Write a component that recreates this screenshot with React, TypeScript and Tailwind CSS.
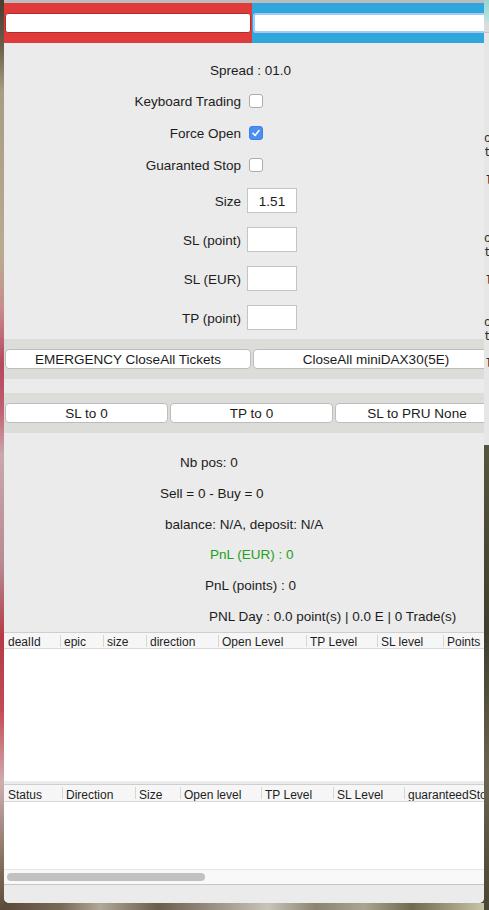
import React from "react";

function Checkbox({ checked }: { checked?: boolean }) {
  if (checked) {
    return (
      <span className="ml-[8px] flex h-[14px] w-[14px] items-center justify-center rounded-[3px] border border-[#3d7fe6] bg-[#4b8ff5]">
        <svg width="10" height="10" viewBox="0 0 10 10">
          <path d="M2 5.3 L4.1 7.4 L8 2.6" fill="none" stroke="white" strokeWidth="1.6" strokeLinecap="round" strokeLinejoin="round" />
        </svg>
      </span>
    );
  }
  return <span className="ml-[8px] block h-[14px] w-[14px] rounded-[3px] border border-[#adadad] bg-white" />;
}

function CheckRow({ label, checked, mt }: { label: string; checked?: boolean; mt: string }) {
  return (
    <div className={`flex h-[20px] items-center ${mt}`}>
      <span className="w-[237px] pt-[3px] text-right">{label}</span>
      <Checkbox checked={checked} />
    </div>
  );
}

function InputRow({ label, value, mt }: { label: string; value?: string; mt: string }) {
  return (
    <div className={`flex h-[25px] items-center ${mt}`}>
      <span className="w-[237px] pt-[3px] text-right">{label}</span>
      <div className="ml-[6px] h-[25px] w-[50px] border border-[#c4c4c4] bg-white pt-[1px] text-center leading-[23px]">{value}</div>
    </div>
  );
}

function Btn({ children, w }: { children: React.ReactNode; w: string }) {
  return (
    <div className={`flex h-[20px] shrink-0 items-center justify-center rounded-[4px] border border-[#bdbdbd] bg-white pt-[3px] text-[13.5px] text-[#1a1a1a] ${w}`}>
      {children}
    </div>
  );
}

function HeaderCell({ label, w, first }: { label: string; w: string; first?: boolean }) {
  return (
    <div className={`flex h-full shrink-0 items-center overflow-hidden whitespace-nowrap ${w}`}>
      {first ? null : <span className="mr-[3px] block h-[12px] w-px shrink-0 bg-[#d6d6d6]" />}
      <span className={first ? "pl-[4px] pt-[3px]" : "pt-[3px]"}>{label}</span>
    </div>
  );
}

export default function App() {
  const t1: [string, string][] = [
    ["dealId", "w-[56px]"],
    ["epic", "w-[43px]"],
    ["size", "w-[43px]"],
    ["direction", "w-[72px]"],
    ["Open Level", "w-[88px]"],
    ["TP Level", "w-[71px]"],
    ["SL level", "w-[66px]"],
    ["Points", "w-[60px]"],
  ];
  const t2: [string, string][] = [
    ["Status", "w-[58px]"],
    ["Direction", "w-[73px]"],
    ["Size", "w-[45px]"],
    ["Open level", "w-[81px]"],
    ["TP Level", "w-[72px]"],
    ["SL Level", "w-[71px]"],
    ["guaranteedStop", "w-[100px]"],
  ];

  return (
    <div className="flex h-[910px] w-[489px] overflow-hidden bg-[#4d4a38] font-['Liberation_Sans',Arial,sans-serif] text-[13.5px] text-[#1c1c1c]">
      {/* left desktop strip */}
      <div className="h-full w-[4px] shrink-0 bg-[linear-gradient(to_bottom,#4a3c2e_0%,#6b5d48_5%,#a89c84_10%,#b9ab90_28%,#c98a8e_34%,#b4485a_40%,#c06070_45%,#c9a7ad_50%,#b78a92_62%,#b53a45_70%,#c44a55_78%,#cfaeb0_86%,#8a7565_94%,#5b4a3a_100%)]" />

      {/* window column */}
      <div className="flex w-[480px] shrink-0 flex-col">
        <div className="flex h-[903px] flex-col overflow-hidden rounded-b-[5px] bg-[#ebebeb]">
          <div className="h-[3px] shrink-0 bg-[#bcbcbc]" />
          {/* colour bar */}
          <div className="flex h-[40px] shrink-0">
            <div className="w-[248px] shrink-0 bg-[#e03b3b] pl-[1px] pt-[10px]">
              <div className="h-[20px] w-[246px] rounded-[3px] border border-[#b52b2b] bg-white" />
            </div>
            <div className="flex-1 overflow-hidden bg-[#2fa6dc] pl-[1px] pt-[10px]">
              <div className="h-[20px] w-[260px] rounded-[3px] border-2 border-[#a6c8f2] bg-white" />
            </div>
          </div>

          {/* form panel */}
          <div className="flex h-[296px] shrink-0 flex-col pt-[17px]">
            <div className="flex h-[20px] items-center pl-[206px] pt-[3px]">Spread : 01.0</div>
            <CheckRow label="Keyboard Trading" mt="mt-[11px]" />
            <CheckRow label="Force Open" checked mt="mt-[12px]" />
            <CheckRow label="Guaranted Stop" mt="mt-[12px]" />
            <InputRow label="Size" value="1.51" mt="mt-[13px]" />
            <InputRow label="SL (point)" mt="mt-[14px]" />
            <InputRow label="SL (EUR)" mt="mt-[14px]" />
            <InputRow label="TP (point)" mt="mt-[14px]" />
          </div>

          {/* button band 1 */}
          <div className="flex h-[40px] shrink-0 gap-[2px] overflow-hidden bg-[#dcddd8] pl-[1px] pt-[10px]">
            <Btn w="w-[246px]">EMERGENCY CloseAll Tickets</Btn>
            <Btn w="w-[246px]">CloseAll miniDAX30(5E)</Btn>
          </div>
          <div className="h-[14px] shrink-0 bg-[#ebebeb]" />
          {/* button band 2 */}
          <div className="flex h-[40px] shrink-0 gap-[2px] overflow-hidden bg-[#dcddd8] pl-[1px] pt-[10px]">
            <Btn w="w-[163px]">SL to 0</Btn>
            <Btn w="w-[163px]">TP to 0</Btn>
            <Btn w="w-[164px]">SL to PRU None</Btn>
          </div>

          {/* stats */}
          <div className="flex h-[199px] shrink-0 flex-col pt-[15px]">
            <div className="flex h-[31px] items-center pl-[176px]">Nb pos: 0</div>
            <div className="flex h-[31px] items-center pl-[156px]">Sell = 0 - Buy = 0</div>
            <div className="flex h-[31px] items-center pl-[161px]">balance: N/A, deposit: N/A</div>
            <div className="flex h-[31px] items-center pl-[206px] text-[#22a021]">PnL (EUR) : 0</div>
            <div className="flex h-[31px] items-center pl-[201px]">PnL (points) : 0</div>
            <div className="flex h-[31px] items-center whitespace-nowrap pl-[205px]">PNL Day : 0.0 point(s) | 0.0 E | 0 Trade(s)</div>
          </div>

          {/* table 1 */}
          <div className="shrink-0 border-t border-[#cfcfcf]">
            <div className="flex h-[16px] overflow-hidden border-b border-[#d9d9d9] bg-[#f6f6f6] text-[12px] text-[#1e1e1e]">
              {t1.map(([l, w], i) => (
                <HeaderCell key={l} label={l} w={w} first={i === 0} />
              ))}
            </div>
            <div className="h-[132px] bg-white" />
          </div>
          <div className="h-[3px] shrink-0 bg-[#ebebeb]" />

          {/* table 2 */}
          <div className="shrink-0 border-t border-[#cfcfcf]">
            <div className="flex h-[17px] overflow-hidden border-b border-[#d9d9d9] bg-[#f6f6f6] text-[12px] text-[#1e1e1e]">
              {t2.map(([l, w], i) => (
                <HeaderCell key={l} label={l} w={w} first={i === 0} />
              ))}
            </div>
            <div className="h-[67px] bg-white" />
            <div className="border-t border-[#e6e6e6] bg-[#f9f9f9]">
              <div className="flex h-[14px] items-start pl-[3px] pt-[3px]">
                <div className="h-[8px] w-[198px] rounded-full bg-[#c1c1c1]" />
              </div>
            </div>
            <div className="h-px bg-[#c6c6c6]" />
          </div>
          <div className="flex-1 bg-[#ebebeb]" />
        </div>
        {/* bottom desktop strip */}
        <div className="h-[7px] shrink-0 bg-[linear-gradient(to_right,#5b4a3a,#7a6a58_12%,#b0a898_20%,#6b5d4d_32%,#c8c4b8_55%,#8a8470_65%,#a9a590_75%,#6f6a50_85%,#c8c4a8)]" />
      </div>

      {/* right strip: background window + desktop */}
      <div className="flex w-[5px] shrink-0 flex-col overflow-hidden">
        <div className="h-[22px] shrink-0 bg-[linear-gradient(to_bottom,#93d6cf,#bfe3de)]" />
        <div className="h-[11px] shrink-0 border-b border-[#c2c2c2] bg-[#dcdcdc]" />
        <div className="flex h-[412px] shrink-0 flex-col bg-[#e6e6e6] font-['Liberation_Mono',monospace] text-[12px] leading-[14px] text-[#2a2a2a]">
          <div className="h-[99px] shrink-0" />
          <div className="h-[14px] shrink-0">c</div>
          <div className="h-[14px] shrink-0">t</div>
          <div className="h-[14px] shrink-0" />
          <div className="h-[14px] shrink-0 pl-[1px]">l</div>
          <div className="h-[44px] shrink-0" />
          <div className="h-[14px] shrink-0">c</div>
          <div className="h-[14px] shrink-0">t</div>
          <div className="h-[14px] shrink-0" />
          <div className="h-[14px] shrink-0 pl-[1px]">l</div>
          <div className="h-[28px] shrink-0" />
          <div className="h-[14px] shrink-0">c</div>
          <div className="h-[14px] shrink-0">t</div>
          <div className="h-[13px] shrink-0" />
          <div className="h-[14px] shrink-0 pl-[1px]">l</div>
        </div>
        <div className="flex-1 bg-[linear-gradient(to_bottom,#56543c,#3f3e2c_40%,#6a6450_70%,#4a4634)]" />
      </div>
    </div>
  );
}
